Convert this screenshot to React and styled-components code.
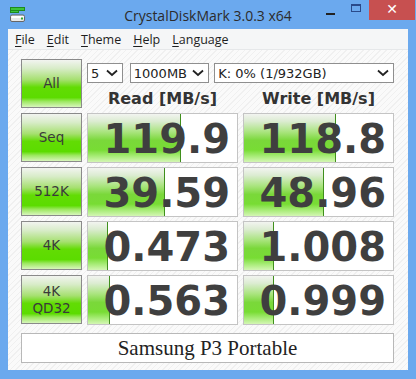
import React from "react";
import styled, { createGlobalStyle } from "styled-components";

const GlobalStyle = createGlobalStyle`
	html, body {
		margin: 0;
		padding: 0;
		background: #6ba9ee;
	}
	body {
		font-family: "DejaVu Sans", "Liberation Sans", sans-serif;
	}
`;

const Frame = styled.div`
	width: 416px;
	height: 379px;
	background: #6ba9ee;
	display: flex;
	flex-direction: column;
	box-sizing: border-box;
	padding: 0 8px 9px 8px;
`;

const TitleBar = styled.div`
	height: 30px;
	display: flex;
	align-items: flex-start;
`;

const TitleIcon = styled.div`
	width: 26px;
	padding: 7px 0 0 2px;
`;

const TitleText = styled.div`
	flex: 1;
	text-align: center;
	font-family: "Open Sans", "Liberation Sans", sans-serif;
	font-size: 14px;
	color: #2b2b2b;
	padding-top: 6px;
	padding-left: 63px;
`;

const Controls = styled.div`
	display: flex;
	align-items: flex-start;
	margin-right: -7px;
`;

const CtrlBtn = styled.div`
	width: ${(p) => p.$w}px;
	height: 20px;
	display: flex;
	align-items: center;
	justify-content: center;
	background: ${(p) => p.$bg || "transparent"};
`;

const MinGlyph = styled.div`
	width: 9px;
	height: 2px;
	background: #222;
	margin-top: 7px;
`;

const MaxGlyph = styled.div`
	width: 8px;
	height: 5px;
	border: 1px solid #2a4a8a;
	border-top-width: 2px;
	margin-bottom: 4px;
`;

const CloseGlyph = styled.div`
	color: #fff;
	font-family: "DejaVu Sans", sans-serif;
	font-weight: bold;
	font-size: 14px;
	line-height: 1;
	margin-top: -2px;
`;

const MenuBar = styled.div`
	height: 20px;
	background: #f5f6f7;
	display: flex;
	align-items: center;
	gap: 12px;
	padding-left: 7px;
	border-bottom: 1px solid #e6e8ea;
	font-family: "Open Sans", "Liberation Sans", sans-serif;
	font-size: 12.5px;
	color: #1e1e1e;
`;

const MenuItem = styled.span`
	& u {
		text-decoration: underline;
		text-underline-offset: 2px;
	}
`;

const Client = styled.div`
	flex: 1;
	background-color: #fafafa;
	background-image: repeating-linear-gradient(
		135deg,
		#fafafa 0px,
		#fafafa 3px,
		#f0f0f0 3px,
		#f0f0f0 4px
	);
	padding: 9px 14px 7px 13px;
	display: flex;
	flex-direction: column;
	gap: 8px;
`;

const Grid = styled.div`
	display: grid;
	grid-template-columns: 61px 151px 151px;
	grid-auto-rows: 50px;
	column-gap: 5px;
	row-gap: 4px;
`;

const TestButton = styled.div`
	box-sizing: border-box;
	height: 49px;
	border: 1px solid #8a8a8a;
	background: linear-gradient(
		to bottom,
		#f2f4f0 0%,
		#d8ecc8 18%,
		#a6e070 42%,
		#62dc04 58%,
		#5cdc00 80%,
		#9ce860 88%,
		#d8f6bc 100%
	);
	display: flex;
	flex-direction: column;
	align-items: center;
	justify-content: center;
	font-family: "DejaVu Sans", sans-serif;
	font-size: 13.5px;
	line-height: 17px;
	color: #3a3a3a;
`;

const TopCell = styled.div`
	grid-column: 2 / 4;
	display: flex;
	flex-direction: column;
	padding-top: 4px;
`;

const SelectRow = styled.div`
	display: flex;
	gap: 7px;
`;

const Select = styled.div`
	box-sizing: border-box;
	width: ${(p) => p.$w}px;
	margin-left: ${(p) => p.$shift || 0}px;
	height: 20px;
	background: #fff;
	border: 1px solid #8f8f8f;
	display: flex;
	align-items: center;
	justify-content: space-between;
	padding: 0 4px 0 3px;
	font-family: "DejaVu Sans", sans-serif;
	font-size: 13px;
	color: #222;
`;

const Headers = styled.div`
	display: grid;
	grid-template-columns: 151px 151px;
	column-gap: 5px;
	margin-top: 6px;
`;

const Header = styled.div`
	text-align: center;
	font-family: "DejaVu Sans", sans-serif;
	font-weight: bold;
	font-size: 16px;
	color: #333;
`;

const ValueBox = styled.div`
	position: relative;
	box-sizing: border-box;
	border: 1px solid #c4c4c4;
	background: #fff;
	overflow: hidden;
	display: flex;
	align-items: center;
	justify-content: flex-end;
	padding-right: 7px;
`;

const Bar = styled.div`
	position: absolute;
	left: 0;
	top: 0;
	bottom: 0;
	background: linear-gradient(
		to bottom,
		#f2f4f0 0%,
		#dcecd2 15%,
		#a8e47c 38%,
		#7ad83a 55%,
		#78dc34 75%,
		#a8ec78 88%,
		#d4f6b4 100%
	);
	border-right: 1px solid #3f8f1c;
`;

const Value = styled.span`
	position: relative;
	font-family: "DejaVu Sans", sans-serif;
	font-weight: bold;
	font-size: 40px;
	color: #3f3f3f;
	line-height: 1;
	margin-top: 2px;
`;

const Comment = styled.div`
	box-sizing: border-box;
	height: 30px;
	width: 373px;
	background: #fff;
	border: 1px solid #b8b8b8;
	display: flex;
	align-items: center;
	justify-content: center;
	font-family: "Liberation Serif", serif;
	font-size: 21px;
	color: #222;
`;

const Chevron = () => (
	<svg width="12" height="8" viewBox="0 0 12 8">
		<path d="M1 1.5 L6 6 L11 1.5" fill="none" stroke="#222" strokeWidth="1.8" />
	</svg>
);

const DriveIcon = () => (
	<svg width="16" height="16" viewBox="0 0 16 16">
		<rect x="0.5" y="0.5" width="14" height="3" fill="#3cc43c" stroke="#1e8a1e" />
		<rect x="0.5" y="3.5" width="8" height="2" fill="#3cc43c" stroke="#1e8a1e" />
		<rect x="0.5" y="8" width="14" height="6.5" rx="1.5" fill="#e8e8e8" stroke="#666" />
		<rect x="1.5" y="9" width="12" height="2" fill="#fff" />
		<rect x="11" y="10.5" width="2" height="2" fill="#2eaa2e" />
	</svg>
);

const rows = [
	{ label: ["Seq"], read: "119.9", rw: 92, write: "118.8", ww: 91 },
	{ label: ["512K"], read: "39.59", rw: 76, write: "48.96", ww: 79 },
	{ label: ["4K"], read: "0.473", rw: 19, write: "1.008", ww: 29 },
	{ label: ["4K", "QD32"], read: "0.563", rw: 21, write: "0.999", ww: 29 },
];

const menus = ["File", "Edit", "Theme", "Help", "Language"];

export default function App() {
	return (
		<>
			<GlobalStyle />
			<Frame>
				<TitleBar>
					<TitleIcon>
						<DriveIcon />
					</TitleIcon>
					<TitleText>CrystalDiskMark 3.0.3 x64</TitleText>
					<Controls>
						<CtrlBtn $w={26}>
							<MinGlyph />
						</CtrlBtn>
						<CtrlBtn $w={26}>
							<MaxGlyph />
						</CtrlBtn>
						<CtrlBtn $w={46} $bg="#c75050">
							<CloseGlyph>✕</CloseGlyph>
						</CtrlBtn>
					</Controls>
				</TitleBar>
				<MenuBar>
					{menus.map((m) => (
						<MenuItem key={m}>
							<u>{m[0]}</u>
							{m.slice(1)}
						</MenuItem>
					))}
				</MenuBar>
				<Client>
					<Grid>
						<TestButton>All</TestButton>
						<TopCell>
							<SelectRow>
								<Select $w={36}>
									5<Chevron />
								</Select>
								<Select $w={80}>
									1000MB<Chevron />
								</Select>
								<Select $w={181} $shift={-2}>
									K: 0% (1/932GB)<Chevron />
								</Select>
							</SelectRow>
							<Headers>
								<Header>Read [MB/s]</Header>
								<Header>Write [MB/s]</Header>
							</Headers>
						</TopCell>
						{rows.map((r) => (
							<React.Fragment key={r.label.join("")}>
								<TestButton>
									{r.label.map((l) => (
										<span key={l}>{l}</span>
									))}
								</TestButton>
								<ValueBox>
									<Bar style={{ width: r.rw }} />
									<Value>{r.read}</Value>
								</ValueBox>
								<ValueBox>
									<Bar style={{ width: r.ww }} />
									<Value>{r.write}</Value>
								</ValueBox>
							</React.Fragment>
						))}
					</Grid>
					<Comment>Samsung P3 Portable</Comment>
				</Client>
			</Frame>
		</>
	);
}
